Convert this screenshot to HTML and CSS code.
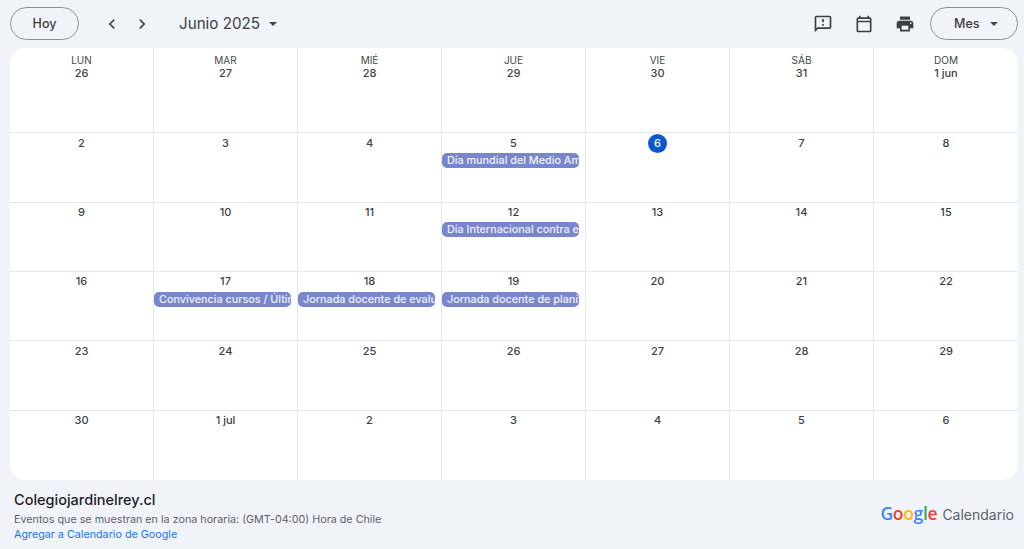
FILE: index.html
```html
<!DOCTYPE html>
<html lang="es">
<head>
<meta charset="utf-8">
<title>Junio 2025</title>
<link rel="stylesheet" href="styles.css">
</head>
<body>
<header class="toolbar">
  <button class="pill today">Hoy</button>
  <div class="nav">
    <svg class="chev" viewBox="0 0 24 24"><path d="M15.4 7.4 14 6l-6 6 6 6 1.4-1.4L10.8 12z"/></svg>
    <svg class="chev" viewBox="0 0 24 24"><path d="M8.6 16.6 10 18l6-6-6-6-1.4 1.4L13.2 12z"/></svg>
  </div>
  <div class="month"><span>Junio 2025</span><i class="caret"></i></div>
  <div class="tools">
    <svg class="tool" viewBox="0 0 24 24"><path d="M20 2H4c-1.1 0-1.99.9-1.99 2L2 22l4-4h14c1.1 0 2-.9 2-2V4c0-1.1-.9-2-2-2zm0 14H5.17L4 17.17V4h16v12zM11 12h2v2h-2zm0-6h2v4h-2z"/></svg>
    <svg class="tool" viewBox="0 0 24 24"><path d="M19 4h-1V2h-2v2H8V2H6v2H5c-1.1 0-2 .9-2 2v14c0 1.1.9 2 2 2h14c1.1 0 2-.9 2-2V6c0-1.1-.9-2-2-2zm0 16H5V10h14v10zm0-12H5V6h14v2z"/></svg>
    <svg class="tool" viewBox="0 0 24 24"><path d="M19 8H5c-1.66 0-3 1.34-3 3v6h4v4h12v-4h4v-6c0-1.66-1.34-3-3-3zm-3 11H8v-5h8v5zm3-7c-.55 0-1-.45-1-1s.45-1 1-1 1 .45 1 1-.45 1-1 1zm-1-9H6v4h12V3z"/></svg>
  </div>
  <button class="pill view"><span>Mes</span><i class="caret small"></i></button>
</header>

<main class="grid">
  <div class="cell"><div class="dow">LUN</div><div class="num">26</div></div>
  <div class="cell"><div class="dow">MAR</div><div class="num">27</div></div>
  <div class="cell"><div class="dow">MIÉ</div><div class="num">28</div></div>
  <div class="cell"><div class="dow">JUE</div><div class="num">29</div></div>
  <div class="cell"><div class="dow">VIE</div><div class="num">30</div></div>
  <div class="cell"><div class="dow">SÁB</div><div class="num">31</div></div>
  <div class="cell"><div class="dow">DOM</div><div class="num">1 jun</div></div>

  <div class="cell"><div class="date">2</div></div>
  <div class="cell"><div class="date">3</div></div>
  <div class="cell"><div class="date">4</div></div>
  <div class="cell"><div class="date">5</div><div class="event">Día mundial del Medio Ambiente</div></div>
  <div class="cell"><div class="date"><span class="now">6</span></div></div>
  <div class="cell"><div class="date">7</div></div>
  <div class="cell"><div class="date">8</div></div>

  <div class="cell"><div class="date">9</div></div>
  <div class="cell"><div class="date">10</div></div>
  <div class="cell"><div class="date">11</div></div>
  <div class="cell"><div class="date">12</div><div class="event">Día Internacional contra el Trabajo Infantil</div></div>
  <div class="cell"><div class="date">13</div></div>
  <div class="cell"><div class="date">14</div></div>
  <div class="cell"><div class="date">15</div></div>

  <div class="cell"><div class="date">16</div></div>
  <div class="cell"><div class="date">17</div><div class="event">Convivencia cursos / Último día</div></div>
  <div class="cell"><div class="date">18</div><div class="event">Jornada docente de evaluación</div></div>
  <div class="cell"><div class="date">19</div><div class="event">Jornada docente de planificación</div></div>
  <div class="cell"><div class="date">20</div></div>
  <div class="cell"><div class="date">21</div></div>
  <div class="cell"><div class="date">22</div></div>

  <div class="cell"><div class="date">23</div></div>
  <div class="cell"><div class="date">24</div></div>
  <div class="cell"><div class="date">25</div></div>
  <div class="cell"><div class="date">26</div></div>
  <div class="cell"><div class="date">27</div></div>
  <div class="cell"><div class="date">28</div></div>
  <div class="cell"><div class="date">29</div></div>

  <div class="cell"><div class="date">30</div></div>
  <div class="cell"><div class="date">1 jul</div></div>
  <div class="cell"><div class="date">2</div></div>
  <div class="cell"><div class="date">3</div></div>
  <div class="cell"><div class="date">4</div></div>
  <div class="cell"><div class="date">5</div></div>
  <div class="cell"><div class="date">6</div></div>
</main>

<footer class="footer">
  <div class="info">
    <div class="cal-name">Colegiojardinelrey.cl</div>
    <div class="zone">Eventos que se muestran en la zona horaria: (GMT-04:00) Hora de Chile</div>
    <a class="add" href="#">Agregar a Calendario de Google</a>
  </div>
  <div class="logo"><span class="google"><b class="c-b">G</b><b class="c-r">o</b><b class="c-y">o</b><b class="c-b">g</b><b class="c-g">l</b><b class="c-r">e</b></span><span class="cal-word">Calendario</span></div>
</footer>
</body>
</html>
```

FILE: styles.css
```css
* { box-sizing: border-box; }
html, body { margin: 0; height: 100%; }
body {
  background: #f0f4f9;
  color: #3c4043;
  font-family: Inter, Roboto, "Liberation Sans", sans-serif;
  width: 1024px;
  height: 549px;
  overflow: hidden;
  display: flex;
  flex-direction: column;
  padding: 7px 6px 0 10px;
}
.toolbar {
  display: flex;
  align-items: center;
  height: 33px;
  margin-bottom: 8px;
}
.pill {
  height: 33px;
  border: 1px solid #8e918f;
  border-radius: 17px;
  background: transparent;
  color: #3c4043;
  font: 500 12.5px Inter, Roboto, "Liberation Sans", sans-serif;
  padding: 0;
}
.today { width: 69px; }
.view {
  width: 88px;
  display: flex;
  align-items: center;
  padding-left: 23px;
  gap: 11px;
}
.nav {
  display: flex;
  gap: 10px;
  margin-left: 23px;
}
.chev { width: 20px; height: 20px; fill: #444746; display: block; }
.month {
  display: flex;
  align-items: center;
  gap: 9px;
  margin-left: 27px;
  font-size: 15.2px;
  color: #3c4043;
}
.caret {
  width: 0;
  height: 0;
  border-left: 4.5px solid transparent;
  border-right: 4.5px solid transparent;
  border-top: 4.5px solid #444746;
}
.caret.small { border-left-width: 4px; border-right-width: 4px; border-top-width: 4px; }
.tools {
  margin-left: auto;
  margin-right: 15px;
  display: flex;
  gap: 21px;
}
.tool { width: 20px; height: 20px; fill: #3c4043; display: block; }

.grid {
  width: 1008px;
  height: 432px;
  background: #fff;
  border-radius: 16px;
  display: grid;
  grid-template-columns: repeat(7, 144px);
  grid-template-rows: 85px 70px 69px 69px 70px 69px;
  overflow: hidden;
}
.cell {
  border-right: 1px solid #e3e8ee;
  border-bottom: 1px solid #e3e8ee;
  text-align: center;
  min-width: 0;
  padding-top: 2px;
}
.cell:nth-child(7n) { border-right: 0; }
.cell:nth-last-child(-n+7) { border-bottom: 0; }
.cell:nth-child(-n+7) { padding-top: 6px; }
.cell:nth-child(n+15):nth-child(-n+28),
.cell:nth-child(n+36) { padding-top: 1px; }
.cell:nth-child(n+22):nth-child(-n+28) .date { height: 19px; }
.dow {
  font-size: 10px;
  font-weight: 400;
  line-height: 12px;
  color: #444746;
}
.num, .date {
  font-size: 11px;
  font-weight: 500;
  line-height: 14px;
  color: #3c4043;
}
.date { height: 18px; padding-top: 1px; }
.now {
  display: block;
  width: 19px;
  height: 19px;
  margin: -2px auto 0;
  border-radius: 50%;
  background: #0b57d0;
  color: #fff;
  line-height: 19px;
}
.event {
  height: 15px;
  width: 137px;
  padding-left: 5px;
  border-radius: 5px;
  background: #7986cb;
  color: #f1f3fb;
  font-size: 10.8px;
  font-weight: 500;
  line-height: 15px;
  text-align: left;
  white-space: nowrap;
  overflow: hidden;
}

.footer {
  display: flex;
  justify-content: space-between;
  padding: 10px 4px 0 4px;
}
.cal-name { font-size: 14.5px; font-weight: 500; line-height: 19px; color: #202124; }
.zone { font-size: 10.75px; line-height: 15px; color: #5f6368; margin-top: 3px; }
.add { display: block; font-size: 10.75px; line-height: 15px; color: #1a73e8; text-decoration: none; }
.logo { display: flex; align-items: baseline; gap: 5px; margin-top: 11px; height: 24px; }
.google { font-size: 17.5px; letter-spacing: -.3px; font-family: "Open Sans", Roboto, sans-serif; }
.google b { font-weight: 600; }
.c-b { color: #4285f4; }
.c-r { color: #ea4335; }
.c-y { color: #fbbc04; }
.c-g { color: #34a853; }
.cal-word { font-size: 14px; color: #5f6368; }
```
